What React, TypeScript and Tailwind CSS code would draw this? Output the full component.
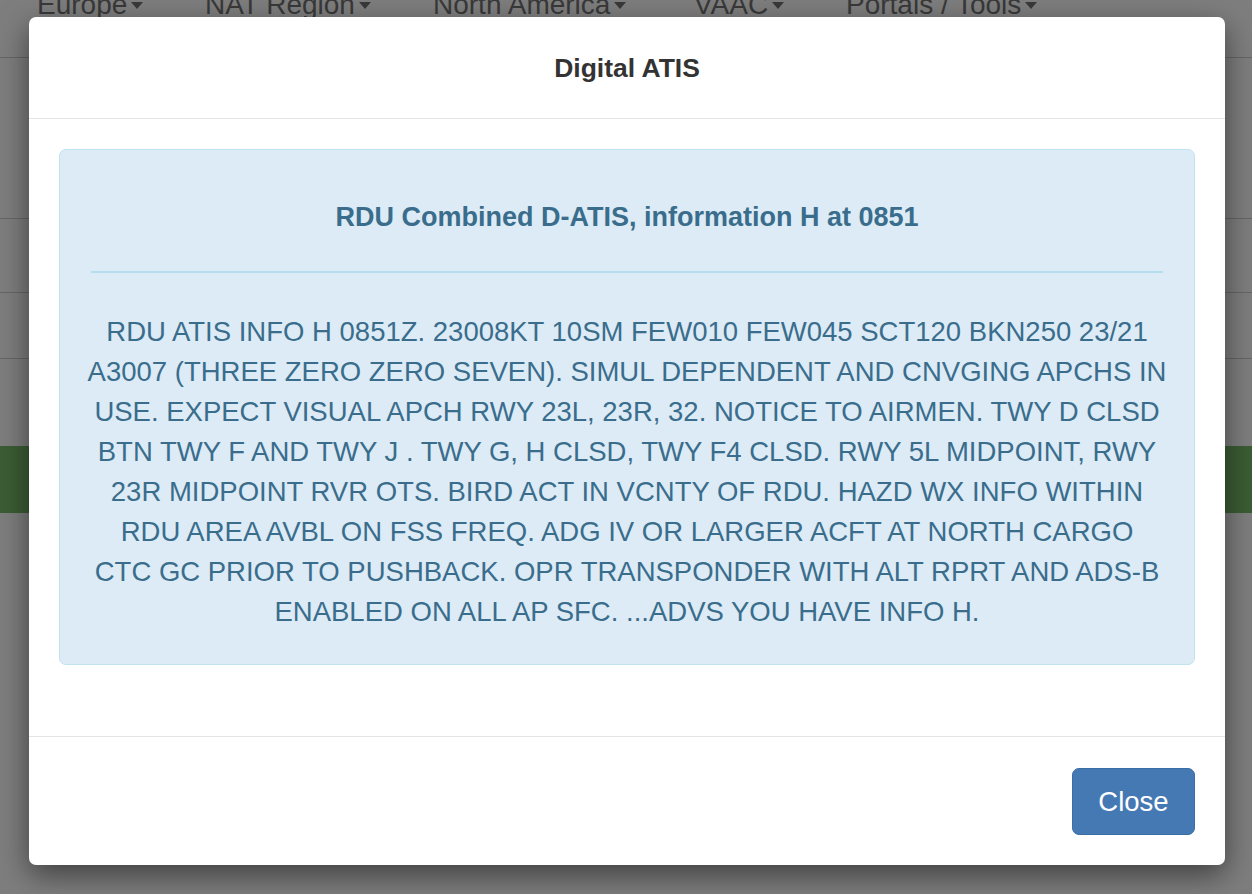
import React from "react";

function Caret() {
  return (
    <span className="ml-[4px] inline-block h-0 w-0 border-l-[6px] border-r-[6px] border-t-[7px] border-l-transparent border-r-transparent border-t-[#393939]" />
  );
}

const navItems: { label: string; w: string }[] = [
  { label: "Europe", w: "w-[106px]" },
  { label: "NAT Region", w: "w-[166px]" },
  { label: "North America", w: "w-[199px]" },
  { label: "VAAC", w: "w-[90px]" },
  { label: "Portals / Tools", w: "w-[197px]" },
];

const atisLines = [
  "RDU ATIS INFO H 0851Z. 23008KT 10SM FEW010 FEW045 SCT120 BKN250 23/21",
  "A3007 (THREE ZERO ZERO SEVEN). SIMUL DEPENDENT AND CNVGING APCHS IN",
  "USE. EXPECT VISUAL APCH RWY 23L, 23R, 32. NOTICE TO AIRMEN. TWY D CLSD",
  "BTN TWY F AND TWY J . TWY G, H CLSD, TWY F4 CLSD. RWY 5L MIDPOINT, RWY",
  "23R MIDPOINT RVR OTS. BIRD ACT IN VCNTY OF RDU. HAZD WX INFO WITHIN",
  "RDU AREA AVBL ON FSS FREQ. ADG IV OR LARGER ACFT AT NORTH CARGO",
  "CTC GC PRIOR TO PUSHBACK. OPR TRANSPONDER WITH ALT RPRT AND ADS-B",
  "ENABLED ON ALL AP SFC. ...ADVS YOU HAVE INFO H.",
];

export default function App() {
  return (
    <div className="relative h-[894px] w-[1252px] overflow-hidden bg-[#7e7e7e] font-['Liberation_Sans',Arial,sans-serif]">
      {/* dimmed background page */}
      <div className="flex flex-col">
        <nav className="-mt-[15px] flex h-[73px] items-start gap-[62px] border-b border-[#666] pl-[37px] text-[28px] leading-[40px] text-[#393939]">
          {navItems.map((n) => (
            <span key={n.label} className={`flex items-center ${n.w}`}>
              <span className="whitespace-nowrap">{n.label}</span>
              <Caret />
            </span>
          ))}
        </nav>
        <div className="h-[161px] border-b border-[#666]" />
        <div className="h-[74px] border-b border-[#666]" />
        <div className="h-[66px] border-b border-[#666]" />
        <div className="h-[87px]" />
        <div className="h-[67px] bg-[#3b5d34]" />
      </div>

      {/* modal */}
      <div className="absolute left-[29px] top-[17px] flex h-[848px] w-[1196px] flex-col rounded-[7px] bg-white shadow-[0_10px_30px_rgba(0,0,0,0.5)]">
        <div className="flex h-[102px] items-center justify-center border-b border-[#e5e5e5]">
          <h4 className="text-[26.5px] font-bold leading-[34px] text-[#333]">Digital ATIS</h4>
        </div>
        <div className="h-[617px] px-[30px] pt-[30px]">
          <div className="h-[516px] rounded-[7px] border border-[#bfe3ef] bg-[#dcebf6] px-[31px] pt-[50px] text-center text-[#3a6d8c]">
            <h4 className="text-[27px] font-bold leading-[34px]">RDU Combined D-ATIS, information H at 0851</h4>
            <hr className="mb-[39px] mt-[37px] border-t-2 border-[#b3deee]" />
            <div className="flex flex-col items-center text-[27.5px] leading-[40px]">
              {atisLines.map((l) => (
                <span key={l} className="whitespace-nowrap">
                  {l}
                </span>
              ))}
            </div>
          </div>
        </div>
        <div className="flex flex-1 items-start justify-end border-t border-[#e5e5e5] pr-[30px] pt-[31px]">
          <button className="h-[67px] w-[123px] rounded-[7px] border border-[#3a6ea6] bg-[#4579b4] text-[27.5px] text-white">
            Close
          </button>
        </div>
      </div>
    </div>
  );
}
